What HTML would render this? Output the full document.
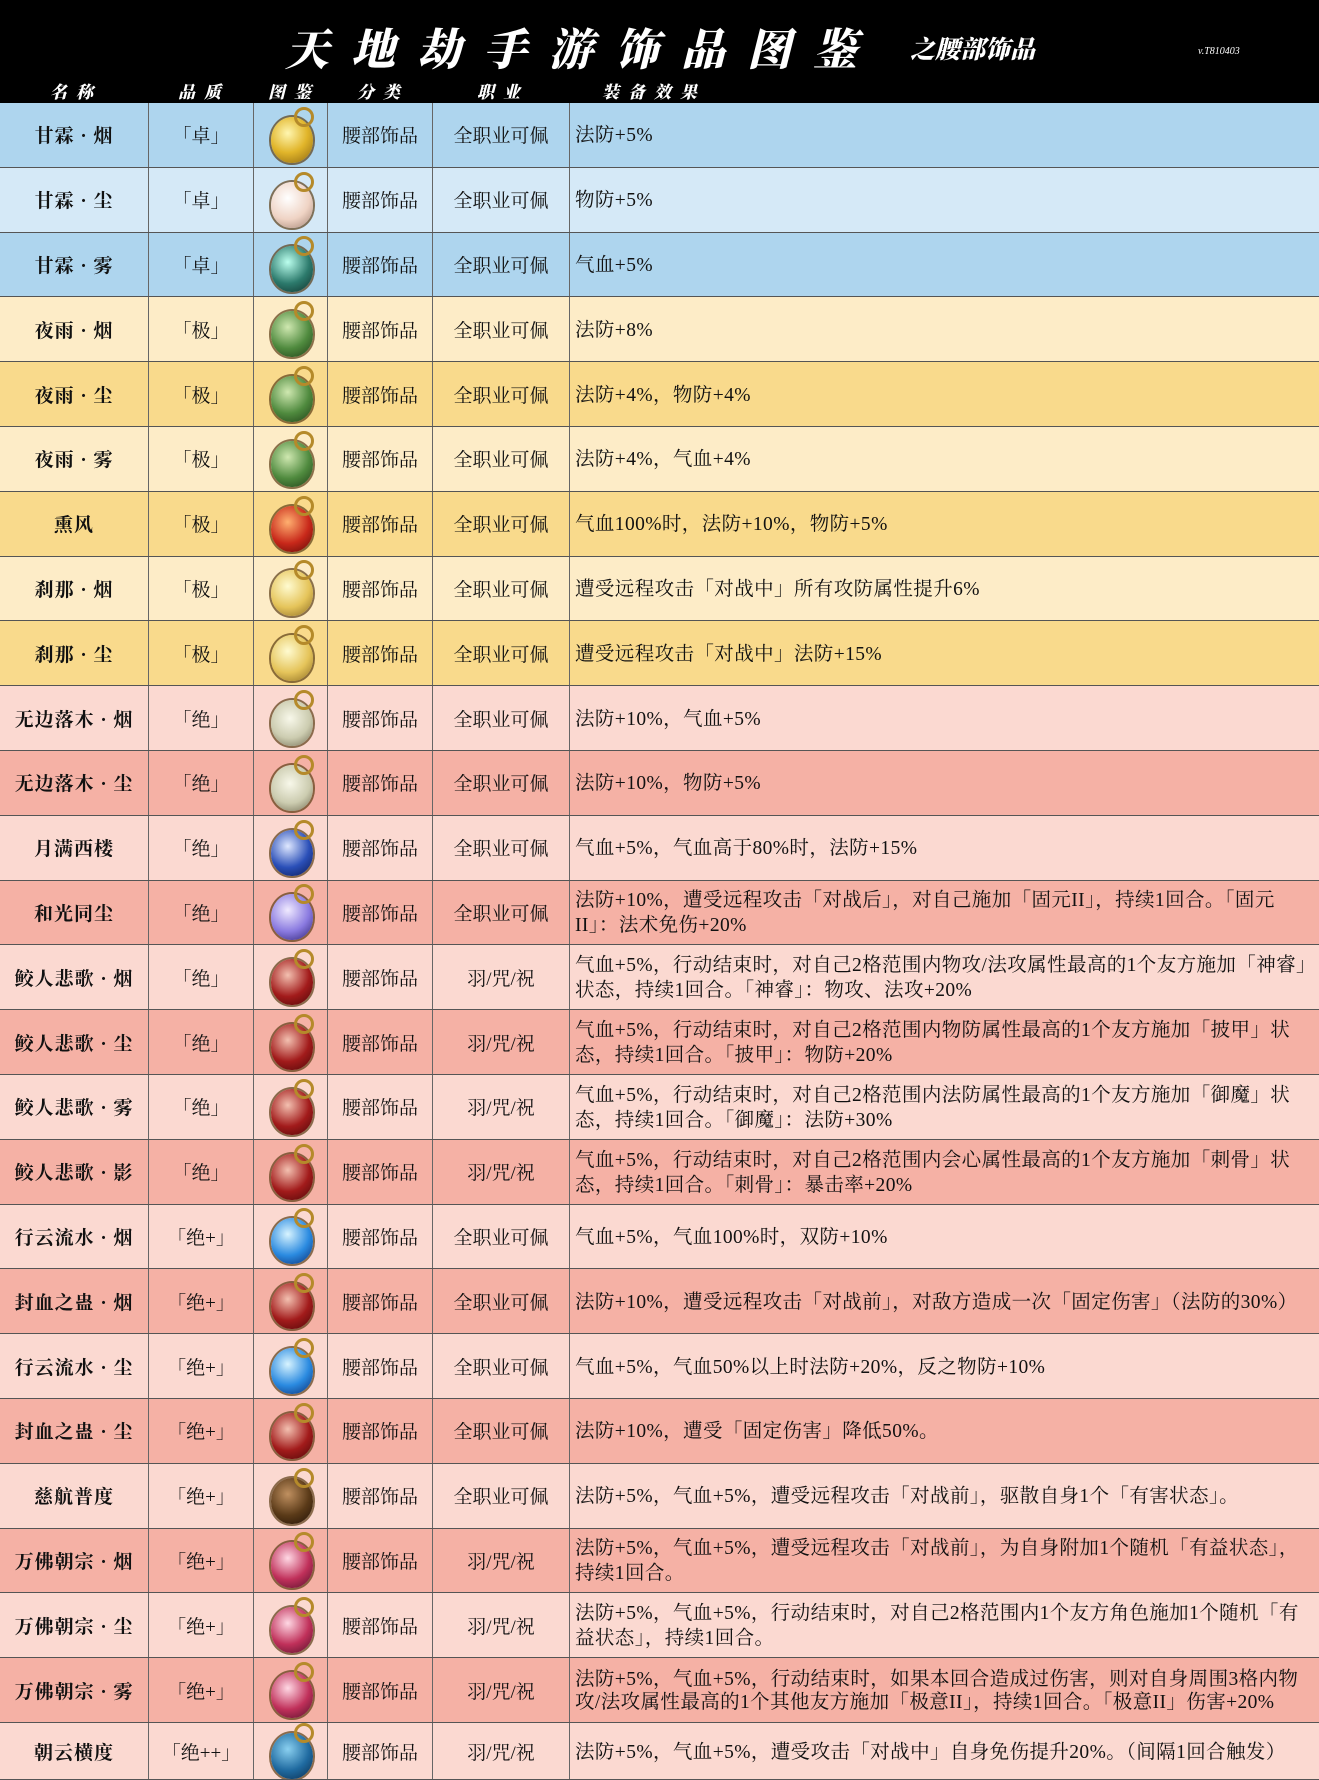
<!DOCTYPE html>
<html><head><meta charset="utf-8"><style>
*{margin:0;padding:0;box-sizing:border-box}
body{width:1319px;height:1780px;background:#000;font-family:"Liberation Serif","Noto Serif CJK SC",serif;overflow:hidden;position:relative}
.hd{position:absolute;left:0;top:0;width:1319px;height:103px;background:#000;color:#fff}
.title{position:absolute;left:285px;top:14px;font-size:44px;font-weight:900;letter-spacing:22px;font-family:"Noto Serif CJK SC",serif;font-style:italic}
.sub{position:absolute;left:910px;top:30px;font-size:25px;font-weight:900;font-family:"Noto Serif CJK SC",serif;font-style:italic}
.ver{position:absolute;left:1198px;top:46px;font-size:10px;font-style:italic}
.lab{position:absolute;top:78px;font-size:17px;font-weight:900;letter-spacing:9px;font-family:"Noto Serif CJK SC",serif;font-style:italic}
.tb{position:absolute;left:0;top:103px;width:1319px;height:1677px;display:grid;grid-template-rows:repeat(25,1fr)}
.r{display:grid;grid-template-columns:149px 105px 74px 105px 137px 749px;border-bottom:1.5px solid #555}
.r>div{border-right:1px solid #666;display:flex;align-items:center;justify-content:center;font-size:19px;color:#111;overflow:hidden}
.r>div:first-child{font-weight:bold;letter-spacing:1px}
.r>div:last-child{justify-content:flex-start;padding-left:5px;padding-right:4px;padding-top:2px;line-height:25px;border-right:none;font-size:19.5px;letter-spacing:0.4px}
.b1{background:#aed5ee}.b2{background:#d5e9f7}
.y1{background:#fdecc7}.y2{background:#f9da8c}
.p1{background:#fbd9d1}.p2{background:#f5b1a5}
.ic{width:46px;height:56px;position:relative}
.ic:before{content:"";position:absolute;left:3px;top:10px;width:42px;height:46px;border-radius:50% 50% 48% 48%;background:var(--g);box-shadow:0 0 0 2px rgba(90,60,20,.7)}
.ic:after{content:"";position:absolute;left:26px;top:0;width:14px;height:14px;border-radius:50%;border:3px solid #b58a2a}
.gold{--g:radial-gradient(circle at 40% 35%,#fff6b0,#e1b52a 50%,#8a6410)}
.pearl{--g:radial-gradient(circle at 40% 35%,#fff,#efd3c4 55%,#a08070)}
.teal{--g:radial-gradient(circle at 40% 35%,#bfe,#2c7a6c 55%,#0f2e2a)}
.green{--g:radial-gradient(circle at 40% 35%,#cfe8b0,#4f8a3e 55%,#1f3c16)}
.redg{--g:radial-gradient(circle at 40% 35%,#ffb070,#c8281a 55%,#5a0a06)}
.ygold{--g:radial-gradient(circle at 40% 35%,#fffbd0,#e5c45a 55%,#8a6a20)}
.jade{--g:radial-gradient(circle at 45% 40%,#f8f8ea,#ccccb0 55%,#6f6a50)}
.blue{--g:radial-gradient(circle at 40% 35%,#dfe8ff,#2a4fb8 55%,#0a1850)}
.purp{--g:radial-gradient(circle at 40% 35%,#f0eaff,#8a7ae0 55%,#2a1f70)}
.wine{--g:radial-gradient(circle at 40% 35%,#f3c0b0,#a21b1b 55%,#4a0707)}
.aqua{--g:radial-gradient(circle at 40% 35%,#d8f4ff,#2a8ae0 55%,#0a2a70)}
.brown{--g:radial-gradient(circle at 40% 35%,#c09060,#5a3a18 55%,#201006)}
.rose{--g:radial-gradient(circle at 40% 35%,#ffd8e4,#c0305a 55%,#50102a)}
.navy{--g:radial-gradient(circle at 40% 35%,#8ad0f0,#1f6aa0 55%,#0a2a4a)}
</style></head><body>
<div class="hd">
<div class="title">天地劫手游饰品图鉴</div>
<div class="sub">之腰部饰品</div>
<div class="ver">v.T810403</div>
<div class="lab" style="left:50px">名称</div>
<div class="lab" style="left:178px">品质</div>
<div class="lab" style="left:268px">图鉴</div>
<div class="lab" style="left:357px">分类</div>
<div class="lab" style="left:477px">职业</div>
<div class="lab" style="left:602px">装备效果</div>
</div>
<div class="tb">
<div class="r b1"><div>甘霖 · 烟</div><div>「卓」</div><div><span class="ic gold"></span></div><div>腰部饰品</div><div>全职业可佩</div><div>法防+5%</div></div>
<div class="r b2"><div>甘霖 · 尘</div><div>「卓」</div><div><span class="ic pearl"></span></div><div>腰部饰品</div><div>全职业可佩</div><div>物防+5%</div></div>
<div class="r b1"><div>甘霖 · 雾</div><div>「卓」</div><div><span class="ic teal"></span></div><div>腰部饰品</div><div>全职业可佩</div><div>气血+5%</div></div>
<div class="r y1"><div>夜雨 · 烟</div><div>「极」</div><div><span class="ic green"></span></div><div>腰部饰品</div><div>全职业可佩</div><div>法防+8%</div></div>
<div class="r y2"><div>夜雨 · 尘</div><div>「极」</div><div><span class="ic green"></span></div><div>腰部饰品</div><div>全职业可佩</div><div>法防+4%，物防+4%</div></div>
<div class="r y1"><div>夜雨 · 雾</div><div>「极」</div><div><span class="ic green"></span></div><div>腰部饰品</div><div>全职业可佩</div><div>法防+4%，气血+4%</div></div>
<div class="r y2"><div>熏风</div><div>「极」</div><div><span class="ic redg"></span></div><div>腰部饰品</div><div>全职业可佩</div><div>气血100%时，法防+10%，物防+5%</div></div>
<div class="r y1"><div>刹那 · 烟</div><div>「极」</div><div><span class="ic ygold"></span></div><div>腰部饰品</div><div>全职业可佩</div><div>遭受远程攻击「对战中」所有攻防属性提升6%</div></div>
<div class="r y2"><div>刹那 · 尘</div><div>「极」</div><div><span class="ic ygold"></span></div><div>腰部饰品</div><div>全职业可佩</div><div>遭受远程攻击「对战中」法防+15%</div></div>
<div class="r p1"><div>无边落木 · 烟</div><div>「绝」</div><div><span class="ic jade"></span></div><div>腰部饰品</div><div>全职业可佩</div><div>法防+10%，气血+5%</div></div>
<div class="r p2"><div>无边落木 · 尘</div><div>「绝」</div><div><span class="ic jade"></span></div><div>腰部饰品</div><div>全职业可佩</div><div>法防+10%，物防+5%</div></div>
<div class="r p1"><div>月满西楼</div><div>「绝」</div><div><span class="ic blue"></span></div><div>腰部饰品</div><div>全职业可佩</div><div>气血+5%，气血高于80%时，法防+15%</div></div>
<div class="r p2"><div>和光同尘</div><div>「绝」</div><div><span class="ic purp"></span></div><div>腰部饰品</div><div>全职业可佩</div><div>法防+10%，遭受远程攻击「对战后」，对自己施加「固元II」，持续1回合。「固元II」：法术免伤+20%</div></div>
<div class="r p1"><div>鲛人悲歌 · 烟</div><div>「绝」</div><div><span class="ic wine"></span></div><div>腰部饰品</div><div>羽/咒/祝</div><div>气血+5%，行动结束时，对自己2格范围内物攻/法攻属性最高的1个友方施加「神睿」状态，持续1回合。「神睿」：物攻、法攻+20%</div></div>
<div class="r p2"><div>鲛人悲歌 · 尘</div><div>「绝」</div><div><span class="ic wine"></span></div><div>腰部饰品</div><div>羽/咒/祝</div><div>气血+5%，行动结束时，对自己2格范围内物防属性最高的1个友方施加「披甲」状态，持续1回合。「披甲」：物防+20%</div></div>
<div class="r p1"><div>鲛人悲歌 · 雾</div><div>「绝」</div><div><span class="ic wine"></span></div><div>腰部饰品</div><div>羽/咒/祝</div><div>气血+5%，行动结束时，对自己2格范围内法防属性最高的1个友方施加「御魔」状态，持续1回合。「御魔」：法防+30%</div></div>
<div class="r p2"><div>鲛人悲歌 · 影</div><div>「绝」</div><div><span class="ic wine"></span></div><div>腰部饰品</div><div>羽/咒/祝</div><div>气血+5%，行动结束时，对自己2格范围内会心属性最高的1个友方施加「刺骨」状态，持续1回合。「刺骨」：暴击率+20%</div></div>
<div class="r p1"><div>行云流水 · 烟</div><div>「绝+」</div><div><span class="ic aqua"></span></div><div>腰部饰品</div><div>全职业可佩</div><div>气血+5%，气血100%时，双防+10%</div></div>
<div class="r p2"><div>封血之蛊 · 烟</div><div>「绝+」</div><div><span class="ic wine"></span></div><div>腰部饰品</div><div>全职业可佩</div><div>法防+10%，遭受远程攻击「对战前」，对敌方造成一次「固定伤害」（法防的30%）</div></div>
<div class="r p1"><div>行云流水 · 尘</div><div>「绝+」</div><div><span class="ic aqua"></span></div><div>腰部饰品</div><div>全职业可佩</div><div>气血+5%，气血50%以上时法防+20%，反之物防+10%</div></div>
<div class="r p2"><div>封血之蛊 · 尘</div><div>「绝+」</div><div><span class="ic wine"></span></div><div>腰部饰品</div><div>全职业可佩</div><div>法防+10%，遭受「固定伤害」降低50%。</div></div>
<div class="r p1"><div>慈航普度</div><div>「绝+」</div><div><span class="ic brown"></span></div><div>腰部饰品</div><div>全职业可佩</div><div>法防+5%，气血+5%，遭受远程攻击「对战前」，驱散自身1个「有害状态」。</div></div>
<div class="r p2"><div>万佛朝宗 · 烟</div><div>「绝+」</div><div><span class="ic rose"></span></div><div>腰部饰品</div><div>羽/咒/祝</div><div>法防+5%，气血+5%，遭受远程攻击「对战前」，为自身附加1个随机「有益状态」，持续1回合。</div></div>
<div class="r p1"><div>万佛朝宗 · 尘</div><div>「绝+」</div><div><span class="ic rose"></span></div><div>腰部饰品</div><div>羽/咒/祝</div><div>法防+5%，气血+5%，行动结束时，对自己2格范围内1个友方角色施加1个随机「有益状态」，持续1回合。</div></div>
<div class="r p2"><div>万佛朝宗 · 雾</div><div>「绝+」</div><div><span class="ic rose"></span></div><div>腰部饰品</div><div>羽/咒/祝</div><div style="line-height:23px">法防+5%，气血+5%，行动结束时，如果本回合造成过伤害，则对自身周围3格内物攻/法攻属性最高的1个其他友方施加「极意II」，持续1回合。「极意II」伤害+20%</div></div>
<div class="r p1"><div>朝云横度</div><div>「绝++」</div><div><span class="ic navy"></span></div><div>腰部饰品</div><div>羽/咒/祝</div><div>法防+5%，气血+5%，遭受攻击「对战中」自身免伤提升20%。（间隔1回合触发）</div></div>
</div>
</body></html>
